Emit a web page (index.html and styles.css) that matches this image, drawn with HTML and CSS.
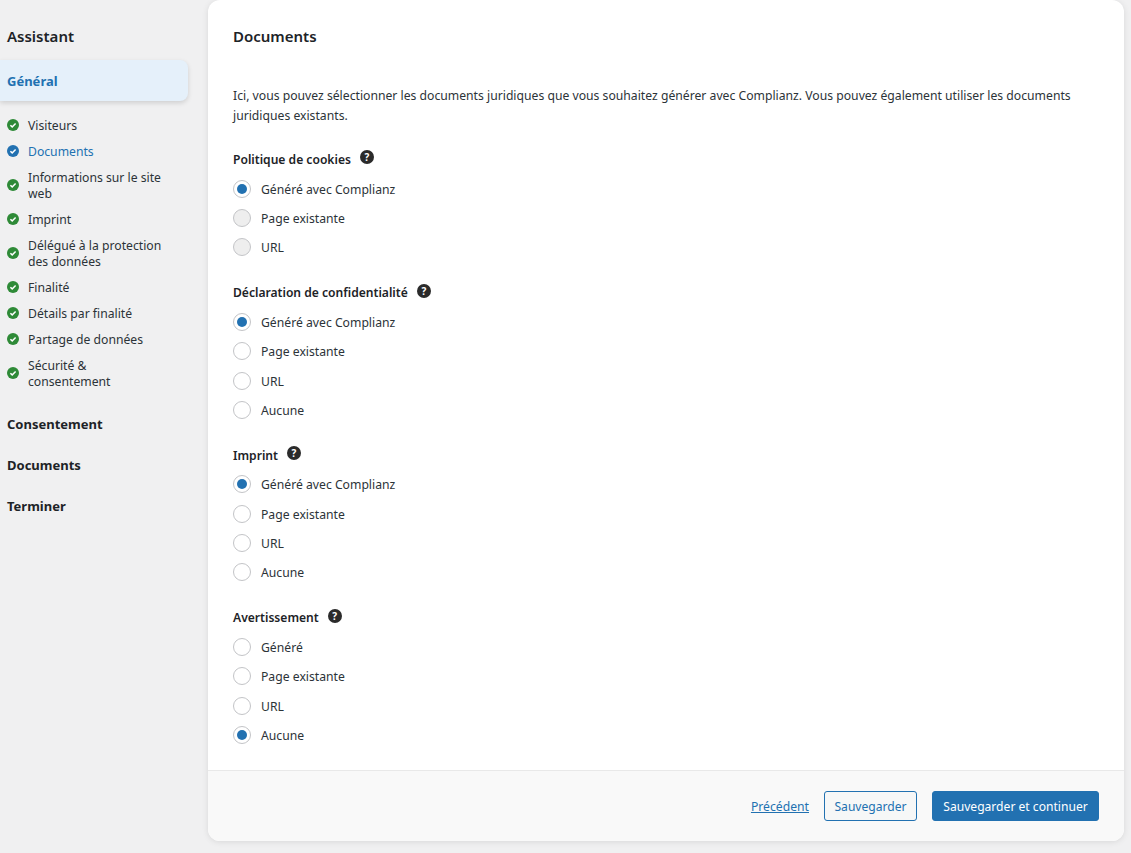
FILE: index.html
```
<!DOCTYPE html>
<html lang="fr">
<head>
<meta charset="utf-8">
<title>Documents</title>
<link rel="stylesheet" href="styles.css">
</head>
<body>
<svg class="defs" width="0" height="0" aria-hidden="true">
  <symbol id="check" viewBox="0 0 12 12"><circle cx="6" cy="6" r="6" fill="currentColor"/><path d="M3.4 6.2l1.8 1.7 3.4-3.5" fill="none" stroke="#fff" stroke-width="1.5"/></symbol>
</svg>
<div class="app">
  <aside class="side">
    <h2 class="side-title">Assistant</h2>
    <div class="side-active">Général</div>
    <ul class="steps">
      <li class="step"><svg class="tick"><use href="#check"/></svg><span>Visiteurs</span></li>
      <li class="step current"><svg class="tick"><use href="#check"/></svg><span>Documents</span></li>
      <li class="step"><svg class="tick"><use href="#check"/></svg><span>Informations sur le site web</span></li>
      <li class="step"><svg class="tick"><use href="#check"/></svg><span>Imprint</span></li>
      <li class="step"><svg class="tick"><use href="#check"/></svg><span>Délégué à la protection des données</span></li>
      <li class="step"><svg class="tick"><use href="#check"/></svg><span>Finalité</span></li>
      <li class="step"><svg class="tick"><use href="#check"/></svg><span>Détails par finalité</span></li>
      <li class="step"><svg class="tick"><use href="#check"/></svg><span>Partage de données</span></li>
      <li class="step"><svg class="tick"><use href="#check"/></svg><span>Sécurité &amp; consentement</span></li>
    </ul>
    <div class="side-group first">Consentement</div>
    <div class="side-group">Documents</div>
    <div class="side-group">Terminer</div>
  </aside>
  <main class="card">
    <div class="card-body">
      <h1 class="card-title">Documents</h1>
      <p class="intro">Ici, vous pouvez sélectionner les documents juridiques que vous souhaitez générer avec Complianz. Vous pouvez également utiliser les documents juridiques existants.</p>

      <section class="field">
        <div class="label"><span>Politique de cookies</span><b class="help">?</b></div>
        <div class="radio"><i class="dot on"></i>Généré avec Complianz</div>
        <div class="radio"><i class="dot off"></i>Page existante</div>
        <div class="radio"><i class="dot off"></i>URL</div>
      </section>

      <section class="field">
        <div class="label"><span>Déclaration de confidentialité</span><b class="help">?</b></div>
        <div class="radio"><i class="dot on"></i>Généré avec Complianz</div>
        <div class="radio"><i class="dot"></i>Page existante</div>
        <div class="radio"><i class="dot"></i>URL</div>
        <div class="radio"><i class="dot"></i>Aucune</div>
      </section>

      <section class="field">
        <div class="label"><span>Imprint</span><b class="help">?</b></div>
        <div class="radio"><i class="dot on"></i>Généré avec Complianz</div>
        <div class="radio"><i class="dot"></i>Page existante</div>
        <div class="radio"><i class="dot"></i>URL</div>
        <div class="radio"><i class="dot"></i>Aucune</div>
      </section>

      <section class="field">
        <div class="label"><span>Avertissement</span><b class="help">?</b></div>
        <div class="radio"><i class="dot"></i>Généré</div>
        <div class="radio"><i class="dot"></i>Page existante</div>
        <div class="radio"><i class="dot"></i>URL</div>
        <div class="radio"><i class="dot on"></i>Aucune</div>
      </section>
    </div>
    <footer class="card-foot">
      <a class="prev" href="#">Précédent</a>
      <button class="btn outline" type="button">Sauvegarder</button>
      <button class="btn solid" type="button">Sauvegarder et continuer</button>
    </footer>
  </main>
</div>
</body>
</html>
```

FILE: styles.css
```
* { box-sizing: border-box; }
html, body { margin: 0; height: 853px; overflow: hidden; }
body { background: #f0f0f1; font-family: "Noto Sans", "Open Sans", sans-serif; font-size: 12.2px; color: #2c3338; }
.defs { position: absolute; }
.app { display: flex; align-items: flex-start; }
.side { width: 208px; flex: none; padding-top: 26px; }
.side-title { margin: 0; padding-left: 7px; font-size: 15px; line-height: 20px; font-weight: 600; color: #1d2327; }
.side-active { margin-top: 14px; width: 188px; height: 41px; padding-left: 7px; display: flex; align-items: center; background: #e5f0fa; border-radius: 0 8px 8px 0; box-shadow: 0 2px 5px rgba(0,0,0,.14); color: #2271b1; font-size: 13px; font-weight: 700; }
.steps { list-style: none; margin: 17px 0 0; padding: 0 0 0 7px; display: flex; flex-direction: column; gap: 10px; }
.step { display: flex; align-items: center; width: 161px; line-height: 16px; }
.step span { margin-left: 9px; }
.tick { width: 12px; height: 12px; margin-top: -2px; flex: none; color: #2e8a37; }
.current { color: #2271b1; }
.current .tick { color: #2271b1; }
.side-group { padding-left: 7px; margin-top: 21px; font-size: 13px; line-height: 20px; font-weight: 700; color: #1d2327; }
.side-group.first { margin-top: 24px; }
.card { width: 916px; height: 841px; display: flex; flex-direction: column; background: #fff; border-radius: 12px; box-shadow: 0 1px 6px rgba(0,0,0,.1); overflow: hidden; }
.card-body { flex: 1; padding: 26px 25px 0; }
.card-title { margin: 0; font-size: 15px; line-height: 20px; font-weight: 600; color: #1d2327; }
.intro { margin: 40px 0 0; width: 860px; line-height: 20px; color: #2c3338; }
.field { margin-top: 22.4px; }
.field + .field { margin-top: 19px; }
.label { display: flex; align-items: center; gap: 9px; height: 22px; font-weight: 600; color: #1d2327; font-size: 12.1px; }
.help { width: 14px; height: 14px; margin-top: -4px; border-radius: 50%; background: #2b2b2b; color: #fff; font-size: 10px; line-height: 14px; font-weight: 700; text-align: center; }
.radio { display: flex; align-items: center; height: 29.4px; }
.label + .radio { margin-top: 4px; }
.dot { width: 18px; height: 18px; margin-top: -1px; margin-right: 10px; border-radius: 50%; border: 1px solid #c3c4c7; background: #fff; flex: none; display: flex; align-items: center; justify-content: center; }
.dot.off { background: #eeeeee; }
.dot.on::after { content: ""; width: 10px; height: 10px; border-radius: 50%; background: #2271b1; }
.card-foot { height: 71px; flex: none; display: flex; align-items: center; justify-content: flex-end; gap: 15px; padding: 0 25px; background: #f9f9f9; border-top: 1px solid #e9e9e9; }
.prev { color: #2271b1; }
.btn { height: 30px; border-radius: 3px; font: 12.1px "Noto Sans", sans-serif; padding: 0; border: 1px solid #2271b1; }
.outline { width: 93px; background: #f6f7f7; color: #2271b1; }
.solid { width: 167px; background: #2271b1; color: #fff; }
```
